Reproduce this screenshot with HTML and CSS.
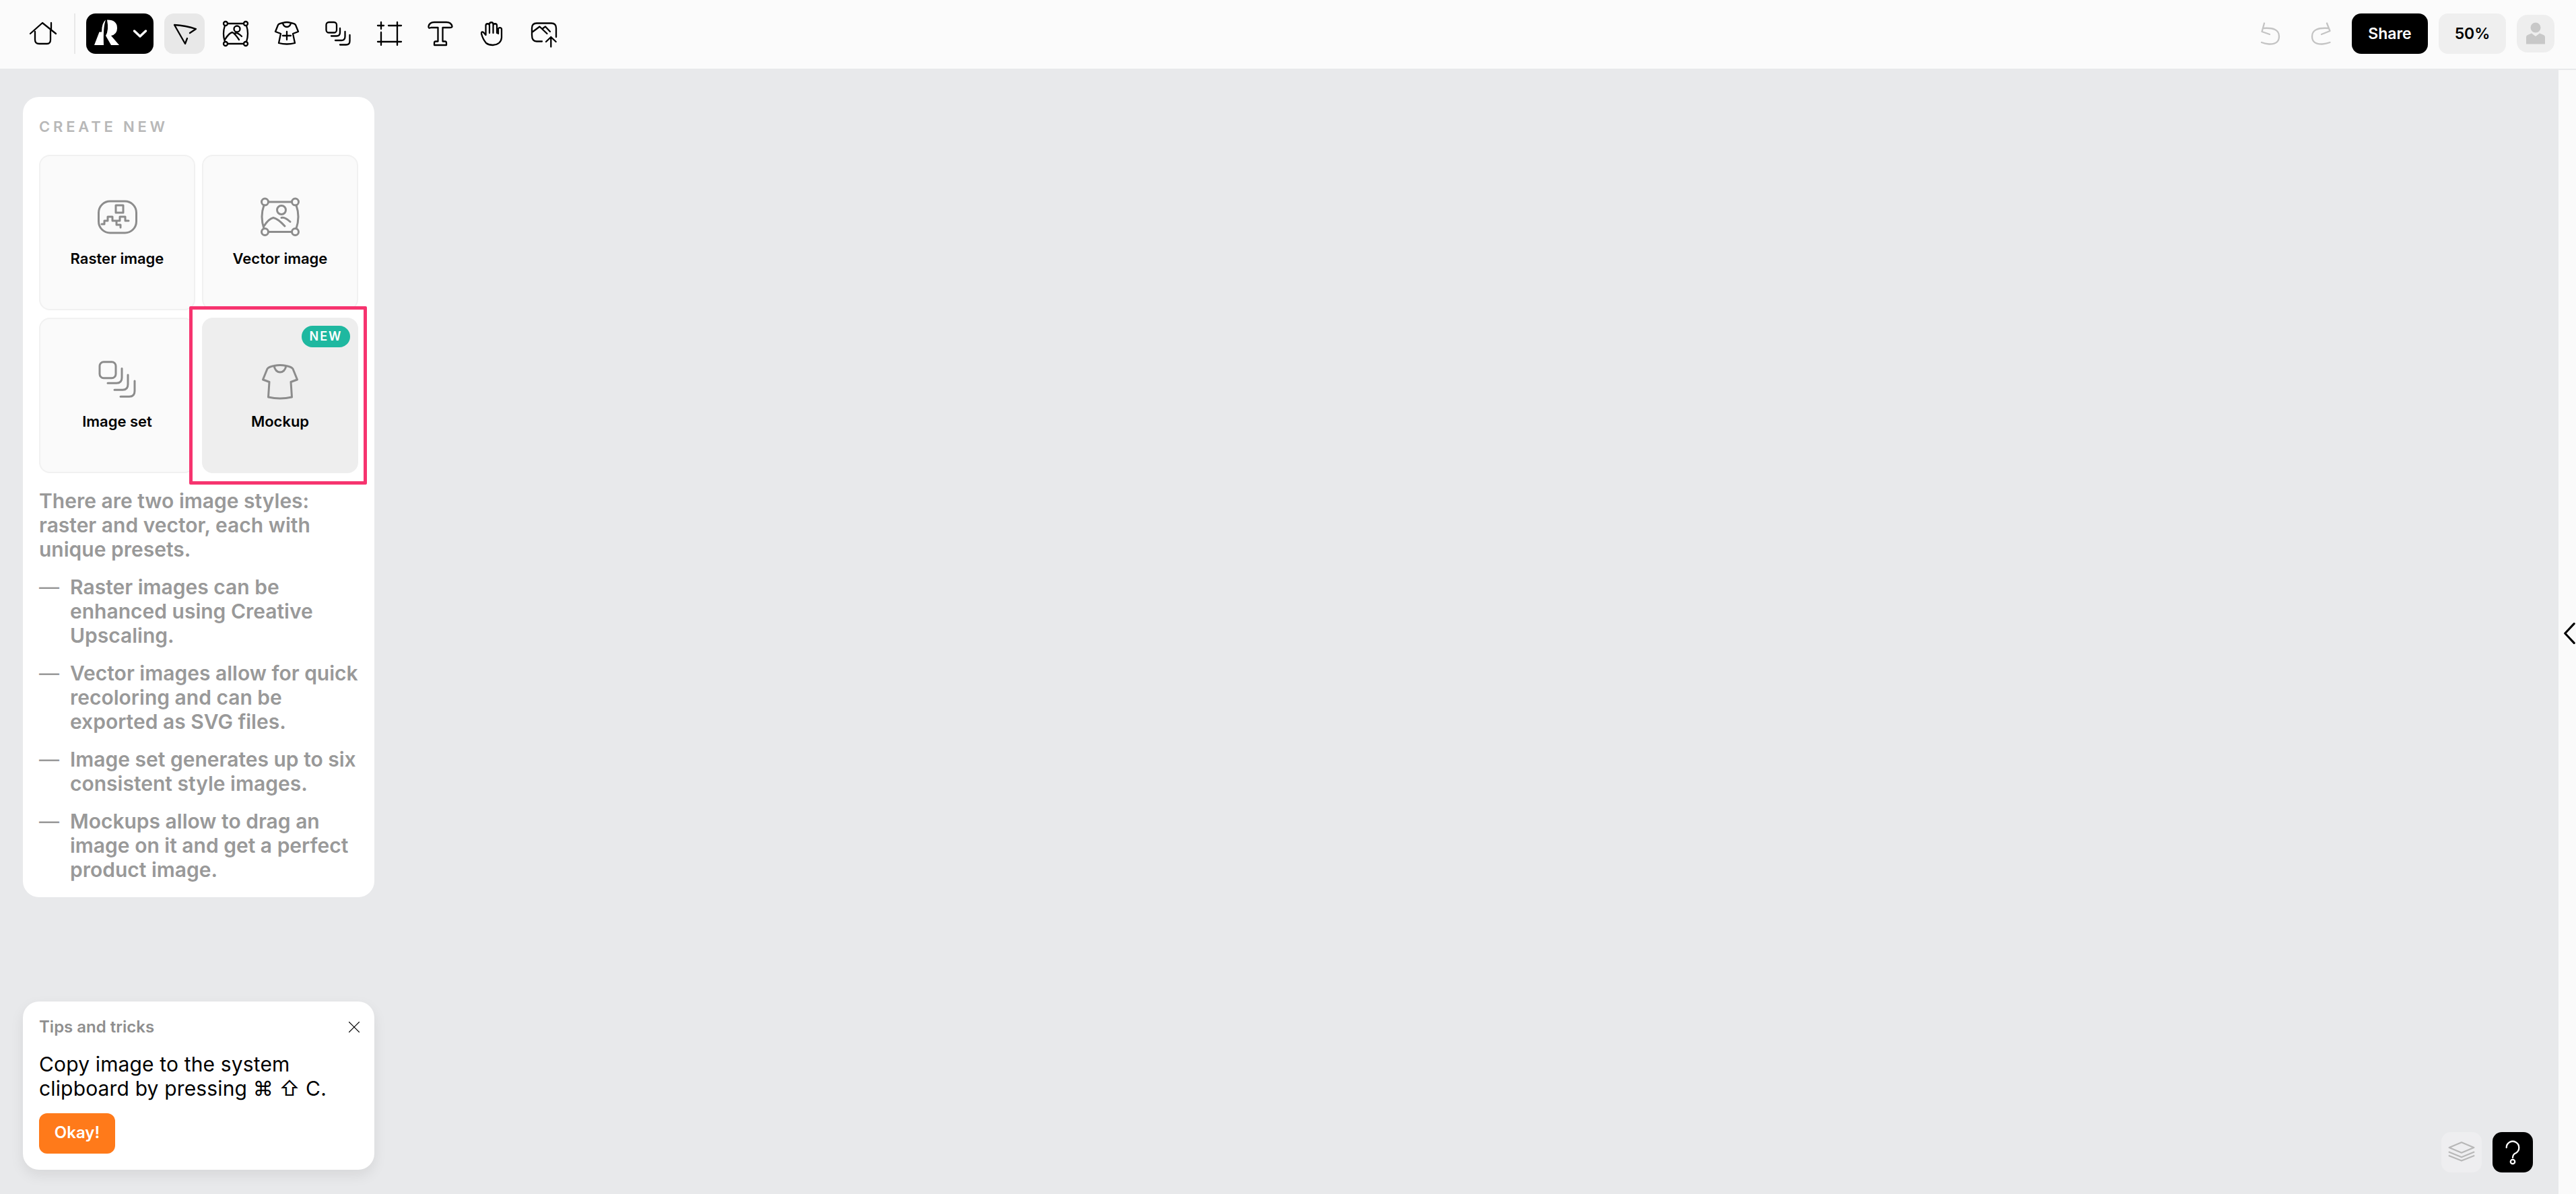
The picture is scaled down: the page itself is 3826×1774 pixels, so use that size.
FILE: index.html
```html
<!DOCTYPE html>
<html lang="en">
<head>
    <meta charset="UTF-8">
    <title>Canvas</title>
    <link rel="stylesheet" href="styles.css">
</head>
<body>
    <header class="topbar">
        <div class="toolbar">
            <button class="tool">
                <svg viewBox="0 0 60 60"><path d="M11 30 L29 14 L49 30 M42 14 V24 M18 27 V39 Q18 45 24 45 H36 Q41 45 41 39 V24"/></svg>
            </button>
            <div class="divider"></div>
            <button class="logo-btn">
                <svg viewBox="0 0 100 60">
                    <path class="logo-fill" d="M12 47 L19.5 27.5 H23 Q23 14 29 9.5 Q25 20 26 47 Z"/>
                    <path class="logo-fill" d="M31 9.5 H32 Q46 9.5 46 22 Q46 31 37 33 L49 47 H37 L29 33 Q34 25 31 9.5 Z"/>
                    <path class="logo-arrow" d="M71.5 26 L80 34 L88.5 26"/>
                </svg>
            </button>
            <button class="tool active">
                <svg viewBox="0 0 60 60"><path d="M34 37 L31 45 L15 17 Q32 18 47 23 L38 29"/></svg>
            </button>
            <button class="tool">
                <svg viewBox="0 0 60 60">
                    <circle cx="15" cy="15" r="3"/><circle cx="45" cy="15" r="3"/><circle cx="15" cy="45" r="3"/><circle cx="45" cy="45" r="3"/>
                    <path d="M18 15 H42 M18 45 H42 M14 18 Q10 30 14 42 M46 18 Q50 30 46 42"/>
                    <circle cx="32" cy="23" r="4.5"/>
                    <path d="M14 39 Q20 29 25 28 Q29 30 35 39 M28 30 Q32 27 39 34"/>
                </svg>
            </button>
            <button class="tool">
                <svg viewBox="0 0 60 60">
                    <path d="M24 14 Q18 15 17 17 L13 27 L21 30 L18 44 Q30 47 42 44 L39 30 L47 27 L43 17 Q42 15 36 14 Q30 12 24 14 Z M24 14 Q25 20 30 20 Q35 20 36 14 M30 27 V39 M24 33 H36"/>
                </svg>
            </button>
            <button class="tool">
                <svg viewBox="0 0 60 60">
                    <rect x="12.5" y="13" width="15.5" height="15.5" rx="4"/>
                    <path d="M20 33.5 H28 Q33 33.5 33 28 V22 M26 40 H35 Q40.5 40 40.5 34 V27 M33 46.5 H42 Q47.5 46.5 47.5 41 V32"/>
                </svg>
            </button>
            <button class="tool">
                <svg viewBox="0 0 60 60"><path d="M18 13 V23 M18 28 V47 M42 13 V47 M13 18 H22 M29 18 H48 M13 42 H48"/></svg>
            </button>
            <button class="tool">
                <svg viewBox="0 0 60 60"><path d="M26.5 21 V41.5 H23 Q21 41.5 21 44 V47 H39 V44 Q39 41.5 37 41.5 H33.5 V21 H44 Q48 21 47.5 19 Q46 13 39 13 H21 Q14 13 12.5 19 Q12 23 16 21 Z"/></svg>
            </button>
            <button class="tool">
                <svg viewBox="0 0 60 60"><path d="M21.5 32 L18 28 Q15 26 15 30 Q17 38 22 44 Q26 47 32 47 Q44 46 45 36 V23 A2.6 2.6 0 0 0 40 23 M21.5 32 V18 A2.6 2.6 0 0 1 27 18 V29 M27 16 A2.7 2.7 0 0 1 32.5 16 V29 M32.5 18 A2.7 2.7 0 0 1 38 18 V29 M40 23 V30"/></svg>
            </button>
            <button class="tool">
                <svg viewBox="0 0 60 60"><path d="M29 41.5 H21 Q14 41.5 14 32 V22 Q14 14.5 21 14.5 H43 Q50 14.5 50 22 V35 M15.5 27 L25.5 19.5 L36.5 30 M30.5 22 L34 19.5 L41 27 M42.3 49.5 V35 M35 42 L42.3 35 L49.7 42"/></svg>
            </button>
        </div>
        <div class="toolbar">
            <button class="tool muted">
                <svg viewBox="0 0 60 60"><path d="M22 14.5 L18.5 27 L30 31 M20 22 Q44 20 44 34 Q44 46 29 45.5 Q23 45 18 43"/></svg>
            </button>
            <button class="tool muted">
                <svg viewBox="0 0 60 60"><path d="M39 14.5 L43.5 26 L31 31 M42 22 Q17 20 17 34 Q17 46 32 45.5 Q38 45 43.5 43"/></svg>
            </button>
            <button class="share-btn">Share</button>
            <button class="zoom-btn">50%</button>
            <div class="avatar">
                <svg viewBox="0 0 56 56">
                    <circle cx="28" cy="19" r="7.5"/>
                    <path d="M14 43.5 V33 Q14 31 16 30 L22 27.5 L28 32 L34 27.5 L40 30 Q42 31 42 33 V43.5 Z"/>
                </svg>
            </div>
        </div>
    </header>

    <div class="workspace">
        <main class="canvas">
            <div class="sidebar">
                <section class="panel create-panel">
                    <h2 class="panel-title">CREATE NEW</h2>
                    <div class="card-grid">
                        <div class="card">
                            <svg class="card-icon" viewBox="0 0 64 64">
                                <rect x="4.5" y="9" width="56" height="47" rx="17"/>
                                <rect x="30" y="15" width="11" height="11"/>
                                <path d="M9 43 H13 V38 H18 V32 H25 V38 H31 V44 H37 V48 M31 38 H36 V32 H44 V38 H49"/>
                            </svg>
                            <span class="card-label">Raster image</span>
                        </div>
                        <div class="card">
                            <svg class="card-icon" viewBox="0 0 64 64">
                                <circle cx="9.5" cy="10" r="5"/><circle cx="54.5" cy="10" r="5"/><circle cx="9.5" cy="54.5" r="5"/><circle cx="54.5" cy="54.5" r="5"/>
                                <path d="M14.5 10 H49.5 M14.5 54.5 H49.5 M8 15 Q2 32 8 49.5 M56 15 Q62 32 56 49.5"/>
                                <circle cx="34" cy="22" r="6.5"/>
                                <path d="M8 46 Q15 35 22 33.5 Q29 35 39 46 M34 33.5 Q39 32 47 39.5"/>
                            </svg>
                            <span class="card-label">Vector image</span>
                        </div>
                        <div class="card">
                            <svg class="card-icon" viewBox="0 0 64 64">
                                <rect x="6" y="5.7" width="24" height="24" rx="6"/>
                                <path d="M18 37.3 H31 Q39 37.3 39 29 V15.5 M28 47.3 H40 Q48 47.3 48 39 V25 M37 57.3 H50 Q58 57.3 58 49 V34"/>
                            </svg>
                            <span class="card-label">Image set</span>
                        </div>
                        <div class="highlight">
                            <div class="card selected">
                                <span class="badge">NEW</span>
                                <svg class="card-icon" viewBox="0 0 64 64">
                                    <path d="M23 11.5 Q15 13 13 16 L6.5 32 L16 35.5 L14.5 58 Q32 62 49.5 58 L48 35.5 L57.5 32 L51 16 Q49 13 41 11.5 Q32 9.5 23 11.5 Z M23 11.5 Q25 21 32 21 Q39 21 41 11.5"/>
                                </svg>
                                <span class="card-label">Mockup</span>
                            </div>
                        </div>
                    </div>
                    <p class="intro">There are two image styles: raster and vector, each with unique presets.</p>
                    <ul class="notes">
                        <li>Raster images can be enhanced using Creative Upscaling.</li>
                        <li>Vector images allow for quick recoloring and can be exported as SVG files.</li>
                        <li>Image set generates up to six consistent style images.</li>
                        <li>Mockups allow to drag an image on it and get a perfect product image.</li>
                    </ul>
                </section>

                <section class="panel tips-panel">
                    <div class="tips-head">
                        <span class="tips-title">Tips and tricks</span>
                        <svg class="tips-close" viewBox="0 0 16 16"><path d="M0.5 0.5 L15.5 15.5 M15.5 0.5 L0.5 15.5"/></svg>
                    </div>
                    <p class="tips-text">Copy image to the system clipboard by pressing ⌘ ⇧ C.</p>
                    <button class="okay-btn">Okay!</button>
                </section>
            </div>

            <div class="corner-tools">
                <button class="float-btn layers-btn">
                    <svg viewBox="0 0 60 60"><path d="M11.7 23 L30 15.3 L48.3 23 L30 30.7 Z M11.7 29.7 L30 37.3 L48.3 29.7 M11.7 35.3 L30 42.5 L48.3 35.3"/></svg>
                </button>
                <button class="float-btn help-btn">
                    <svg viewBox="0 0 60 60"><path d="M20.7 23 A9.3 9.3 0 1 1 35 31 Q30 33 30 38"/><circle cx="30" cy="44" r="3.2"/></svg>
                </button>
            </div>
        </main>

        <aside class="right-strip">
            <svg class="strip-arrow" viewBox="0 0 20 36"><path d="M18 2 L3 18 L18 34"/></svg>
        </aside>
    </div>
</body>
</html>
```

FILE: styles.css
```css
* {
    box-sizing: border-box;
    margin: 0;
    padding: 0;
}

html,
body {
    height: 100%;
}

body {
    display: flex;
    flex-direction: column;
    font-family: Inter, "DejaVu Sans", sans-serif;
    background-color: #e8e9eb;
    overflow: hidden;
}

button {
    border: none;
    background: none;
    font-family: inherit;
}

svg {
    display: block;
    fill: none;
    stroke: currentColor;
    stroke-width: 2.3;
    stroke-linecap: round;
    stroke-linejoin: round;
}

/* top bar */
.topbar {
    display: flex;
    justify-content: space-between;
    height: 102px;
    padding: 20px 32px 22px 34px;
    background-color: #fbfbfb;
    flex-shrink: 0;
}

.toolbar {
    display: flex;
    align-items: center;
    gap: 16px;
}

.tool {
    width: 60px;
    height: 60px;
    border-radius: 14px;
    color: #000;
}

.tool.active {
    background-color: #e8e8e8;
}

.tool.muted {
    color: #c4c4c4;
}

.divider {
    width: 2px;
    height: 60px;
    background-color: #e8e8e8;
}

.logo-btn {
    width: 100px;
    height: 60px;
    background-color: #000;
    border-radius: 14px;
}

.logo-fill {
    fill: #fff;
    stroke: none;
}

.logo-arrow {
    stroke: #fff;
    stroke-width: 3.5;
}

.share-btn {
    width: 113px;
    height: 60px;
    background-color: #000;
    color: #fff;
    border-radius: 14px;
    font-size: 23px;
    font-weight: 600;
}

.zoom-btn {
    width: 100px;
    height: 60px;
    background-color: #efefef;
    color: #000;
    border-radius: 14px;
    font-size: 23px;
    font-weight: 600;
}

.avatar {
    width: 56px;
    height: 56px;
    background-color: #eeeeee;
    border-radius: 16px;
}

.avatar svg {
    fill: #c8c8c8;
    stroke: none;
}

/* canvas */
.workspace {
    flex: 1;
    display: flex;
    min-height: 0;
}

.canvas {
    flex: 1;
    display: flex;
    justify-content: space-between;
    align-items: flex-end;
    padding-right: 38px;
    padding-bottom: 32px;
}

.sidebar {
    align-self: stretch;
    display: flex;
    flex-direction: column;
    justify-content: space-between;
    width: 522px;
    margin-left: 34px;
    margin-top: 42px;
    margin-bottom: 4px;
}

.panel {
    background-color: #fff;
    border-radius: 24px;
    padding: 0 24px;
}

.create-panel {
    height: 1189px;
    padding-top: 31px;
}

.panel-title {
    font-size: 22px;
    font-weight: 600;
    line-height: 26px;
    letter-spacing: 4.8px;
    color: #b8b8b8;
}

.card-grid {
    display: grid;
    grid-template-columns: 232px 232px;
    grid-auto-rows: 231px;
    gap: 11px 10px;
    margin-top: 29px;
    margin-bottom: 23px;
}

.card {
    position: relative;
    display: flex;
    flex-direction: column;
    align-items: center;
    height: 100%;
    padding-top: 58px;
    background-color: #fafafa;
    border: 2px solid #f1f1f1;
    border-radius: 16px;
}

.card.selected {
    background-color: #eeeeee;
    border-color: #eeeeee;
}

.card-icon {
    width: 64px;
    height: 64px;
    color: #8c8c8c;
    stroke-width: 3;
}

.card-label {
    margin-top: 16px;
    font-size: 22px;
    font-weight: 600;
    line-height: 28px;
    color: #000;
}

.highlight {
    position: relative;
}

.highlight::before {
    content: "";
    position: absolute;
    top: -17px;
    right: -13px;
    bottom: -17px;
    left: -19px;
    background-color: #fff;
    border: 5px solid #f6346f;
    border-radius: 2px;
}

.badge {
    position: absolute;
    top: 10px;
    right: 10px;
    width: 72px;
    height: 32px;
    background-color: #1fb8a0;
    border-radius: 16px;
    color: #fff;
    font-size: 18px;
    font-weight: 600;
    line-height: 32px;
    letter-spacing: 2px;
    text-align: center;
}

.intro,
.notes {
    font-size: 30px;
    font-weight: 600;
    line-height: 36px;
    color: #999999;
}

.notes {
    list-style: none;
    margin-top: 20px;
}

.notes li {
    position: relative;
    padding-left: 46px;
    margin-bottom: 20px;
}

.notes li::before {
    content: "—";
    position: absolute;
    left: 0;
    font-weight: 400;
}

/* tips */
.tips-panel {
    height: 250px;
    padding-top: 22px;
    box-shadow: 0 8px 20px rgba(0, 0, 0, 0.08);
}

.tips-head {
    display: flex;
    justify-content: space-between;
    align-items: center;
}

.tips-title {
    font-size: 24px;
    font-weight: 600;
    line-height: 32px;
    color: #8f8f8f;
}

.tips-close {
    width: 16px;
    height: 16px;
    stroke-width: 1.1;
    color: #000;
    margin-right: -2px;
}

.tips-text {
    margin-top: 21px;
    font-size: 30px;
    line-height: 36px;
    letter-spacing: 0.15px;
    color: #000;
}

.okay-btn {
    display: block;
    width: 113px;
    height: 60px;
    margin-top: 19px;
    padding-bottom: 3px;
    background-color: #ff7a1a;
    border-radius: 12px;
    color: #fff;
    font-size: 24px;
    font-weight: 600;
}

/* bottom right buttons */
.corner-tools {
    display: flex;
    gap: 16px;
}

.float-btn {
    width: 60px;
    height: 60px;
    border-radius: 14px;
}

.layers-btn {
    background-color: #eeeef0;
    color: #b8b8b8;
}

.help-btn {
    background-color: #000;
    color: #fff;
}

/* right strip */
.right-strip {
    display: flex;
    align-items: center;
    width: 26px;
    margin-top: 2px;
    padding-top: 4px;
    padding-left: 7px;
    background-color: #fafafa;
}

.strip-arrow {
    width: 18px;
    height: 34px;
    color: #000;
    stroke-width: 3.5;
}
```
